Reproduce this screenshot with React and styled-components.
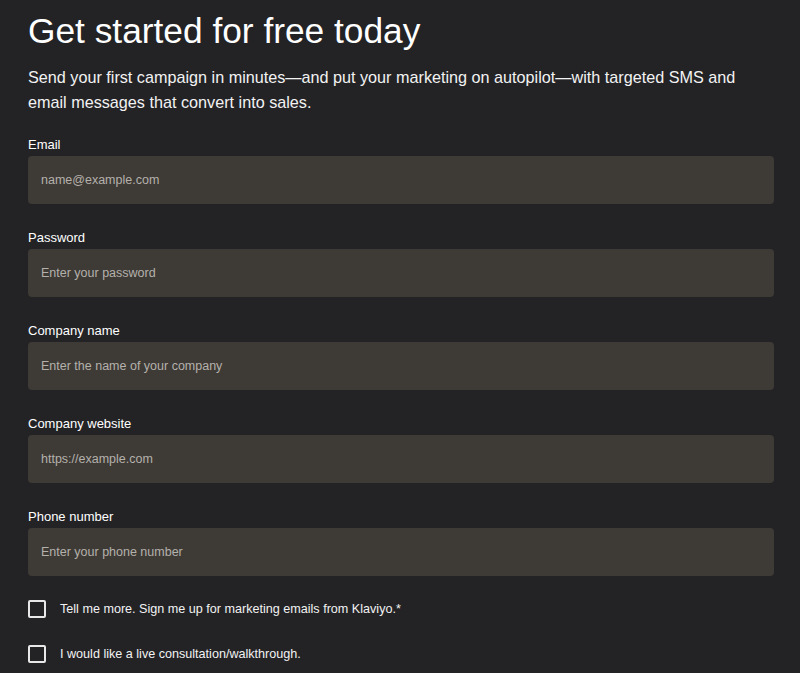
import React from 'react';
import styled, { createGlobalStyle } from 'styled-components';

const GlobalStyle = createGlobalStyle`
  html, body {
    margin: 0;
    padding: 0;
    background: #232326;
  }
  body {
    font-family: "Liberation Sans", Arial, sans-serif;
    color: #ffffff;
  }
`;

const Page = styled.div`
  padding: 8px 26px 0 28px;
  min-height: 673px;
  box-sizing: border-box;
`;

const Title = styled.h1`
  margin: 0;
  font-size: 35.3px;
  font-weight: 400;
  line-height: 46px;
`;

const Lead = styled.p`
  margin: 11px 0 0;
  font-size: 16.2px;
  line-height: 25px;
  color: #f2f2f2;
`;

const Form = styled.form`
  margin-top: 20px;
  display: flex;
  flex-direction: column;
  gap: 24px;
`;

const Field = styled.label`
  display: flex;
  flex-direction: column;
  gap: 1px;
`;

const LabelText = styled.span`
  font-size: 13px;
  line-height: 20px;
  color: #ffffff;
`;

const Input = styled.input`
  height: 48px;
  box-sizing: border-box;
  border: 0;
  border-radius: 4px;
  background: #3e3a35;
  padding: 0 13px;
  font-family: inherit;
  font-size: 12.5px;
  color: #fff;
  outline: none;

  &::placeholder {
    color: #b4b1ac;
  }
`;

const Checks = styled.div`
  display: flex;
  flex-direction: column;
  gap: 27px;
`;

const CheckRow = styled.label`
  display: flex;
  align-items: center;
  gap: 14px;
  font-size: 12.6px;
  color: #f2f2f2;
`;

const Box = styled.span`
  width: 18px;
  height: 18px;
  box-sizing: border-box;
  border: 2px solid #e8e8e8;
  border-radius: 2px;
  flex-shrink: 0;
`;

const fields = [
  { label: 'Email', placeholder: 'name@example.com', type: 'email' },
  { label: 'Password', placeholder: 'Enter your password', type: 'password' },
  { label: 'Company name', placeholder: 'Enter the name of your company', type: 'text' },
  { label: 'Company website', placeholder: 'https://example.com', type: 'text' },
  { label: 'Phone number', placeholder: 'Enter your phone number', type: 'tel' },
];

export default function App() {
  return (
    <>
      <GlobalStyle />
      <Page>
        <Title>Get started for free today</Title>
        <Lead>
          Send your first campaign in minutes—and put your marketing on autopilot—with targeted SMS and
          email messages that convert into sales.
        </Lead>
        <Form onSubmit={(e) => e.preventDefault()}>
          {fields.map((f) => (
            <Field key={f.label}>
              <LabelText>{f.label}</LabelText>
              <Input type={f.type} placeholder={f.placeholder} />
            </Field>
          ))}
          <Checks>
            <CheckRow>
              <Box />
              Tell me more. Sign me up for marketing emails from Klaviyo.*
            </CheckRow>
            <CheckRow>
              <Box />
              I would like a live consultation/walkthrough.
            </CheckRow>
          </Checks>
        </Form>
      </Page>
    </>
  );
}
